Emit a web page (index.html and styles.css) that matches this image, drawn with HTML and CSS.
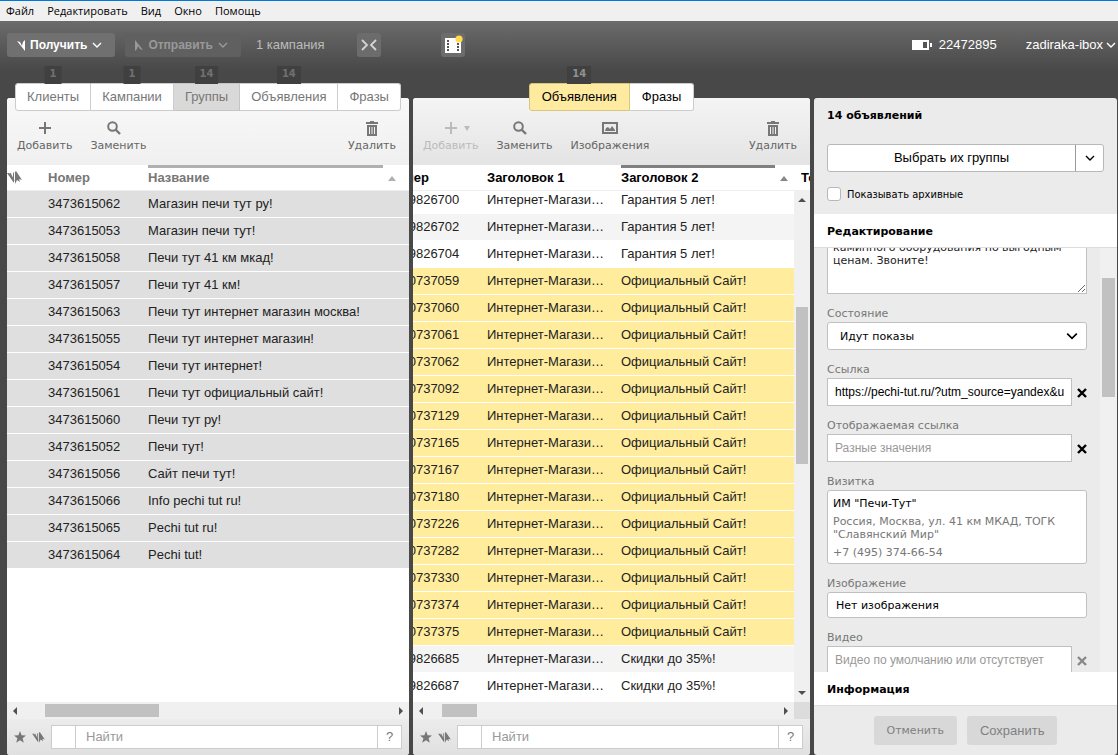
FILE: index.html
```
<!DOCTYPE html>
<html lang="ru">
<head>
    <meta charset="UTF-8">
    <meta name="viewport" content="width=device-width, initial-scale=1.0">
    <title>Директ Коммандер</title>
    <link rel="stylesheet" href="styles.css">
</head>
<body>
    <svg class="sprite" aria-hidden="true">
        <symbol id="i-plus" viewBox="0 0 14 14"><path d="M1 7h12M7 1v12" fill="none" stroke="currentColor" stroke-width="2"/></symbol>
        <symbol id="i-search" viewBox="0 0 14 14"><circle cx="5.500" cy="5.500" r="4.300" fill="none" stroke="currentColor" stroke-width="2"/><path d="M8.500 8.500l4.500 4.500" stroke="currentColor" stroke-width="2.400"/></symbol>
        <symbol id="i-trash" viewBox="0 0 12 15"><path d="M4 0h4v1h4v2H0V1h4zM1 4h10v11H1z" fill="currentColor"/><path d="M3.500 6v7M6 6v7M8.500 6v7" stroke="#f2f2f2"/></symbol>
        <symbol id="i-image" viewBox="0 0 16 12"><path d="M1 1h14v10H1z" fill="none" stroke="currentColor" stroke-width="2"/><path d="M3 9l1-3 2-1 2 2 2-3 3 4v1z" fill="currentColor"/></symbol>
        <symbol id="i-chevron" viewBox="0 0 10 6"><path d="M1 1l4 4 4-4" fill="none" stroke="currentColor" stroke-width="1.400"/></symbol>
        <symbol id="i-star" viewBox="0 0 12 12"><path d="M6 0l1.600 4.200 4.400.2-3.400 2.800 1.200 4.600L6 9.300l-3.800 2.500 1.200-4.600L0 4.400l4.400-.2z" fill="currentColor"/></symbol>
        <symbol id="i-wings" viewBox="0 0 15 13"><path d="M0 2h2l4 5V1l1 1v10zM8 1l1-1 6 9-3-1 1 3-3-2-2 4z" fill="currentColor"/><path d="M3 2l4 8" stroke="currentColor" stroke-width="1.200"/></symbol>
        <symbol id="i-cross" viewBox="0 0 10 10"><path d="M1 1l8 8M9 1L1 9" stroke="currentColor" stroke-width="2.400"/></symbol>
    </svg>

    <nav class="menu">
        <a href="#">Файл</a>
        <a href="#">Редактировать</a>
        <a href="#">Вид</a>
        <a href="#">Окно</a>
        <a href="#">Помощь</a>
    </nav>

    <header class="topbar">
        <button class="top-button get">
            <svg width="8" height="11" viewBox="0 0 8 11"><path d="M0 1l3 1 2 4 1-4 2-2v11z" fill="currentColor"/></svg>
            Получить
            <svg width="10" height="6"><use href="#i-chevron"/></svg>
        </button>
        <button class="top-button send" disabled>
            <svg width="8" height="11" viewBox="0 0 8 11"><path d="M0 0l8 10-3-1-2-3-1 3-2 2z" fill="currentColor"/></svg>
            Отправить
            <svg width="10" height="6"><use href="#i-chevron"/></svg>
        </button>
        <span class="campaigns">1 кампания</span>
        <button class="square-button collapse" aria-label="Свернуть">
            <svg width="16" height="12" viewBox="0 0 16 12"><path d="M1 1l5 5-5 5M15 1l-5 5 5 5" fill="none" stroke="#d4d4d4" stroke-width="1.800"/></svg>
        </button>
        <button class="square-button" aria-label="Видео">
            <svg width="20" height="20" viewBox="0 0 20 20"><path d="M2 3h16v15H2z" fill="#fff"/><path d="M5 5v12M15 8v9" stroke="#555" stroke-width="2" stroke-dasharray="2 1"/><circle cx="16" cy="4" r="3.600" fill="#ffdb4d"/></svg>
        </button>
        <div class="account">
            <svg width="20" height="10" viewBox="0 0 20 10"><path d="M0 0h17v10H0zM18 3h2v4h-2z" fill="#fff"/><path d="M11 2h4v6h-4z" fill="#555"/></svg>
            <span>22472895</span>
            <a class="user" href="#">zadiraka-ibox <svg width="10" height="6"><use href="#i-chevron"/></svg></a>
        </div>
    </header>

    <main class="workspace">
        <section class="column">
            <nav class="tabs tabs-muted">
                <button class="tab"><span class="badge">1</span>Клиенты</button>
                <button class="tab"><span class="badge">1</span>Кампании</button>
                <button class="tab active"><span class="badge">14</span>Группы</button>
                <button class="tab"><span class="badge">14</span>Объявления</button>
                <button class="tab">Фразы</button>
            </nav>
            <div class="panel groups">
                <div class="toolbar">
                    <button class="tool"><svg width="14" height="14"><use href="#i-plus"/></svg>Добавить</button>
                    <button class="tool replace"><svg width="14" height="14"><use href="#i-search"/></svg>Заменить</button>
                    <button class="tool last"><svg width="12" height="15"><use href="#i-trash"/></svg>Удалить</button>
                </div>
                <div class="grid-head">
                    <table>
                        <colgroup><col class="c-state"><col class="c-id"><col></colgroup>
                        <tr>
                            <th><svg width="15" height="13"><use href="#i-wings"/></svg></th>
                            <th>Номер</th>
                            <th><div class="sorted"><span>Название</span><i></i></div></th>
                        </tr>
                    </table>
                </div>
                <div class="grid-body">
                    <div class="grid-clip">
                        <table>
                            <colgroup><col class="c-state"><col class="c-id"><col></colgroup>
                            <tr><td></td><td>3473615062</td><td>Магазин печи тут ру!</td></tr>
                            <tr><td></td><td>3473615053</td><td>Магазин печи тут!</td></tr>
                            <tr><td></td><td>3473615058</td><td>Печи тут 41 км мкад!</td></tr>
                            <tr><td></td><td>3473615057</td><td>Печи тут 41 км!</td></tr>
                            <tr><td></td><td>3473615063</td><td>Печи тут интернет магазин москва!</td></tr>
                            <tr><td></td><td>3473615055</td><td>Печи тут интернет магазин!</td></tr>
                            <tr><td></td><td>3473615054</td><td>Печи тут интернет!</td></tr>
                            <tr><td></td><td>3473615061</td><td>Печи тут официальный сайт!</td></tr>
                            <tr><td></td><td>3473615060</td><td>Печи тут ру!</td></tr>
                            <tr><td></td><td>3473615052</td><td>Печи тут!</td></tr>
                            <tr><td></td><td>3473615056</td><td>Сайт печи тут!</td></tr>
                            <tr><td></td><td>3473615066</td><td>Info pechi tut ru!</td></tr>
                            <tr><td></td><td>3473615065</td><td>Pechi tut ru!</td></tr>
                            <tr><td></td><td>3473615064</td><td>Pechi tut!</td></tr>
                        </table>
                    </div>
                </div>
                <div class="hscroll">
                    <i class="arrow left"></i>
                    <div class="track"><div class="thumb"></div></div>
                    <i class="arrow right"></i>
                </div>
                <div class="filter">
                    <svg width="12" height="12"><use href="#i-star"/></svg>
                    <svg width="13" height="11"><use href="#i-wings"/></svg>
                    <div class="search">
                        <span class="search-mark"></span>
                        <input type="text" placeholder="Найти" aria-label="Найти группы">
                        <button>?</button>
                    </div>
                </div>
            </div>
        </section>

        <section class="column">
            <nav class="tabs tabs-center">
                <button class="tab active"><span class="badge">14</span>Объявления</button>
                <button class="tab">Фразы</button>
            </nav>
            <div class="panel ads">
                <div class="toolbar">
                    <button class="tool" disabled><span class="tool-icon"><svg width="14" height="14"><use href="#i-plus"/></svg><i></i></span>Добавить</button>
                    <button class="tool replace"><svg width="14" height="14"><use href="#i-search"/></svg>Заменить</button>
                    <button class="tool"><svg width="16" height="14"><use href="#i-image"/></svg>Изображения</button>
                    <button class="tool last"><svg width="12" height="15"><use href="#i-trash"/></svg>Удалить</button>
                </div>
                <div class="grid-head">
                    <table>
                        <colgroup><col class="c-id"><col class="c-title"><col class="c-title2"><col></colgroup>
                        <tr>
                            <th>Номер</th>
                            <th>Заголовок 1</th>
                            <th><div class="sorted"><span>Заголовок 2</span><i></i></div></th>
                            <th>Текст</th>
                        </tr>
                    </table>
                </div>
                <div class="grid-body">
                    <div class="grid-clip">
                        <table>
                            <colgroup><col class="c-id"><col class="c-title"><col></colgroup>
                            <tr><td>3459826700</td><td>Интернет-Магазин печей</td><td>Гарантия 5 лет!</td></tr>
                            <tr class="even"><td>3459826702</td><td>Интернет-Магазин печей</td><td>Гарантия 5 лет!</td></tr>
                            <tr><td>3459826704</td><td>Интернет-Магазин печей</td><td>Гарантия 5 лет!</td></tr>
                            <tr class="selected"><td>5310737059</td><td>Интернет-Магазин печей</td><td>Официальный Сайт!</td></tr>
                            <tr class="selected"><td>5310737060</td><td>Интернет-Магазин печей</td><td>Официальный Сайт!</td></tr>
                            <tr class="selected"><td>5310737061</td><td>Интернет-Магазин печей</td><td>Официальный Сайт!</td></tr>
                            <tr class="selected"><td>5310737062</td><td>Интернет-Магазин печей</td><td>Официальный Сайт!</td></tr>
                            <tr class="selected"><td>5310737092</td><td>Интернет-Магазин печей</td><td>Официальный Сайт!</td></tr>
                            <tr class="selected"><td>5310737129</td><td>Интернет-Магазин печей</td><td>Официальный Сайт!</td></tr>
                            <tr class="selected"><td>5310737165</td><td>Интернет-Магазин печей</td><td>Официальный Сайт!</td></tr>
                            <tr class="selected"><td>5310737167</td><td>Интернет-Магазин печей</td><td>Официальный Сайт!</td></tr>
                            <tr class="selected"><td>5310737180</td><td>Интернет-Магазин печей</td><td>Официальный Сайт!</td></tr>
                            <tr class="selected"><td>5310737226</td><td>Интернет-Магазин печей</td><td>Официальный Сайт!</td></tr>
                            <tr class="selected"><td>5310737282</td><td>Интернет-Магазин печей</td><td>Официальный Сайт!</td></tr>
                            <tr class="selected"><td>5310737330</td><td>Интернет-Магазин печей</td><td>Официальный Сайт!</td></tr>
                            <tr class="selected"><td>5310737374</td><td>Интернет-Магазин печей</td><td>Официальный Сайт!</td></tr>
                            <tr class="selected"><td>5310737375</td><td>Интернет-Магазин печей</td><td>Официальный Сайт!</td></tr>
                            <tr class="even"><td>3459826685</td><td>Интернет-Магазин печей</td><td>Скидки до 35%!</td></tr>
                            <tr><td>3459826687</td><td>Интернет-Магазин печей</td><td>Скидки до 35%!</td></tr>
                        </table>
                    </div>
                    <div class="vscroll">
                        <i class="arrow up"></i>
                        <div class="track"><div class="thumb"></div></div>
                        <i class="arrow down"></i>
                    </div>
                </div>
                <div class="hscroll">
                    <i class="arrow left"></i>
                    <div class="track"><div class="thumb"></div></div>
                    <i class="arrow right"></i>
                    <span class="corner"></span>
                </div>
                <div class="filter">
                    <svg width="12" height="12"><use href="#i-star"/></svg>
                    <svg width="13" height="11"><use href="#i-wings"/></svg>
                    <div class="search">
                        <span class="search-mark"></span>
                        <input type="text" placeholder="Найти" aria-label="Найти объявления">
                        <button>?</button>
                    </div>
                </div>
            </div>
        </section>

        <aside class="panel editor">
            <div class="summary">
                <h2>14 объявлений</h2>
                <div class="split">
                    <button class="split-main">Выбрать их группы</button>
                    <button class="split-more" aria-label="Ещё"><svg width="10" height="6"><use href="#i-chevron"/></svg></button>
                </div>
                <label class="archived"><input type="checkbox">Показывать архивные</label>
            </div>
            <h2 class="section-title">Редактирование</h2>
            <div class="form-area">
                <form class="form">
                    <textarea class="box" aria-label="Текст">каминного оборудования по выгодным ценам. Звоните!</textarea>
                    <label for="state">Состояние</label>
                    <div class="select">
                        <select class="box" id="state"><option>Идут показы</option></select>
                        <svg width="12" height="8"><use href="#i-chevron"/></svg>
                    </div>
                    <label for="link">Ссылка</label>
                    <div class="clearable">
                        <input class="box" id="link" type="text" value="https://pechi-tut.ru/?utm_source=yandex&amp;u">
                        <button type="button" aria-label="Очистить"><svg width="10" height="10"><use href="#i-cross"/></svg></button>
                    </div>
                    <label for="shown">Отображаемая ссылка</label>
                    <div class="clearable">
                        <input class="box" id="shown" type="text" placeholder="Разные значения">
                        <button type="button" aria-label="Очистить"><svg width="10" height="10"><use href="#i-cross"/></svg></button>
                    </div>
                    <label for="card">Визитка</label>
                    <button class="box card" id="card" type="button">
                        <b>ИМ "Печи-Тут"</b>
                        <span>Россия, Москва, ул. 41 км МКАД, ТОГК "Славянский Мир"</span>
                        <span>+7 (495) 374-66-54</span>
                    </button>
                    <label for="image">Изображение</label>
                    <button class="box image" id="image" type="button">Нет изображения</button>
                    <label for="video">Видео</label>
                    <div class="clearable">
                        <input class="box" id="video" type="text" placeholder="Видео по умолчанию или отсутствует">
                        <button type="button" aria-label="Очистить" disabled><svg width="10" height="10"><use href="#i-cross"/></svg></button>
                    </div>
                </form>
                <div class="vscroll">
                    <div class="track"><div class="thumb"></div></div>
                </div>
            </div>
            <h2 class="section-title">Информация</h2>
            <div class="actions">
                <button class="cancel" disabled>Отменить</button>
                <button class="save" disabled>Сохранить</button>
            </div>
        </aside>
    </main>
</body>
</html>
```
FILE: styles.css
```
* {
    box-sizing: border-box;
}
body {
    margin: 0;
    height: 100vh;
    display: flex;
    flex-direction: column;
    overflow: hidden;
    background: #484848;
    color: #222;
    font: 13px/16px "Liberation Sans", Arial, sans-serif;
}
button, input, select, textarea {
    font: inherit;
    color: inherit;
    margin: 0;
    padding: 0;
    border: 0;
    border-radius: 0;
    background: none;
    outline: 0;
}
button {
    white-space: nowrap;
}
svg {
    display: block;
    flex: none;
}
.sprite {
    position: absolute;
    width: 0;
    height: 0;
}

/* menu and top bar */
.menu {
    display: flex;
    gap: 13px;
    height: 21px;
    padding-left: 6px;
    border-top: 1px solid #0078d7;
    background: #f0f0f0;
    font: 11px/20px "Open Sans", sans-serif;
}
.menu a {
    color: #000;
    text-decoration: none;
}
.topbar {
    display: flex;
    align-items: center;
    height: 62px;
    padding: 0 2px 14px 7px;
    background: linear-gradient(#6b6b6b, #484848 50px);
    color: #fff;
}
.top-button {
    display: flex;
    align-items: center;
    gap: 5px;
    height: 24px;
    padding: 0 13px 0 10px;
    border-radius: 3px;
    background: #707070;
    font-size: 12px;
    font-weight: bold;
}
.send {
    margin: 0 15px 0 10px;
    background: #606060;
    color: #999;
}
.campaigns {
    color: #bbb;
}
.square-button {
    display: flex;
    align-items: center;
    justify-content: center;
    width: 24px;
    height: 24px;
    border-radius: 3px;
    background: #6c6c6c;
}
.collapse {
    margin: 0 60px 0 32px;
}
.account {
    display: flex;
    align-items: center;
    gap: 7px;
    margin-left: auto;
}
.user {
    display: flex;
    align-items: center;
    gap: 3px;
    margin-left: 22px;
    color: #fff;
    text-decoration: none;
}

/* columns */
.workspace {
    flex: 1;
    min-height: 0;
    display: grid;
    grid-template-columns: 402fr 397fr 303px;
    grid-template-rows: 100%;
    gap: 4px;
    padding: 0 1px 0 7px;
}
.column {
    min-width: 0;
    display: flex;
    flex-direction: column;
}
.tabs {
    position: relative;
    z-index: 1;
    display: flex;
    height: 28px;
    margin: 0 8px -13px;
}
.tabs-center {
    justify-content: center;
}
.tab {
    position: relative;
    padding: 0 12px;
    border: 1px solid #ccc;
    border-left-width: 0;
    background: #fff;
    color: #000;
}
.tabs-muted .tab {
    flex: 1 1 auto;
    padding: 0;
    color: #777;
}
.tab:first-child {
    border-left-width: 1px;
    border-radius: 3px 0 0 3px;
}
.tab:last-child {
    border-radius: 0 3px 3px 0;
}
.tab.active {
    background: #ffeba0;
    border-color: #d6c680;
}
.tabs-muted .tab.active {
    background: #d9d9d9;
    border-color: #c4c4c4;
}
.badge {
    position: absolute;
    bottom: 100%;
    left: 50%;
    transform: translateX(-50%);
    padding: 0 5px 2px;
    background: #404040;
    color: #707070;
    font: bold 10px/16px "DejaVu Sans", sans-serif;
}
.tabs-center .badge {
    color: #909090;
}
.panel {
    flex: 1;
    min-height: 0;
    display: flex;
    flex-direction: column;
    overflow: hidden;
    border-radius: 3px;
    background: #fff;
}
.toolbar {
    display: flex;
    gap: 18px;
    height: 67px;
    padding: 23px 13px 0 10px;
    background: linear-gradient(#f8f8f8, #f0f0f0);
}
.ads .toolbar {
    background: linear-gradient(#f4f4f4, #e4e4e4);
}
.tool {
    display: flex;
    flex-direction: column;
    align-items: center;
    gap: 4px;
    height: 32px;
    color: #666;
    font: 11px/14px "DejaVu Sans", Verdana, sans-serif;
}
.tool:disabled {
    color: #bbb;
}
.tool svg {
    color: #777;
}
.replace svg {
    margin-right: 8px;
}
.tool.last {
    gap: 3px;
    margin-left: auto;
}
.tool-icon {
    display: flex;
    align-items: center;
    gap: 6px;
    margin-left: 12px;
}
.tool-icon i {
    border: 3px solid transparent;
    border-top: 5px solid;
    border-bottom: 0;
}
.tool-icon i, .tool-icon svg {
    color: #bbb;
}

/* tables */
table {
    width: 100%;
    table-layout: fixed;
    border-spacing: 0;
}
th, td {
    padding: 0;
    height: 27px;
    text-align: left;
    white-space: nowrap;
    overflow: hidden;
}
td {
    border-bottom: 1px solid #fff;
    text-overflow: ellipsis;
}
th {
    height: 25px;
    color: #000;
}
.c-state {
    width: 41px;
}
.c-id {
    width: 100px;
}
.c-title {
    width: 134px;
}
.c-title2 {
    width: 180px;
}
.grid-head {
    border-bottom: 1px solid #eee;
    overflow: hidden;
}
.groups th {
    color: #777;
}
.groups td {
    background: #dfdfdf;
}
.ads table {
    width: calc(100% + 26px);
    margin-left: -26px;
}
.ads td:nth-child(2) {
    padding-right: 16px;
}
.even td {
    background: #f4f4f4;
}
.selected td {
    background: #ffec9c;
}
.sorted {
    display: flex;
}
.sorted span {
    flex: 1;
    height: 25px;
    border-top: 3px solid #808080;
    line-height: 19px;
}
.groups .sorted span {
    border-color: #b0b0b0;
}
.sorted i {
    align-self: center;
    width: 8px;
    margin: 2px 13px 0 5px;
    border: 4px solid transparent;
    border-top: 0;
    border-bottom: 5px solid #888;
}
.groups .sorted i {
    border-bottom-color: #b0b0b0;
}
.grid-body {
    flex: 1;
    min-height: 0;
    display: flex;
}
.grid-clip {
    flex: 1;
    min-width: 0;
    overflow: hidden;
}
/* list is scrolled a little down */
.ads .grid-clip table {
    margin-top: -4px;
}

/* scrollbars */
.hscroll, .vscroll {
    display: flex;
    align-items: center;
    background: #f0f0f0;
}
.hscroll {
    height: 17px;
}
.vscroll {
    flex-direction: column;
    width: 16px;
}
.track {
    flex: 1;
    align-self: stretch;
    display: flex;
    padding: 2px 0;
}
.vscroll .track {
    flex-direction: column;
    padding: 0 2px;
}
.thumb {
    background: #c1c1c1;
}
.groups .thumb {
    width: 31%;
    margin-left: 21px;
}
.ads .hscroll .thumb {
    width: 10%;
    margin-left: 12px;
}
.ads .vscroll .thumb {
    height: 33%;
    margin-top: 99px;
}
.editor .thumb {
    height: 28%;
    margin-top: 30px;
}
.arrow {
    width: 8px;
    height: 8px;
    margin: 0 4px;
    border: 4px solid transparent;
}
.arrow.left {
    border-right-color: #505050;
    margin: 0 7px 0 2px;
}
.arrow.right {
    border-left-color: #505050;
    margin: 0 2px 0 7px;
}
.arrow.up {
    border-bottom-color: #505050;
    margin: 3px 0 6px;
}
.arrow.down {
    border-top-color: #505050;
    margin: 6px 0 3px;
}
.corner {
    width: 16px;
    height: 17px;
    background: #dcdcdc;
}

/* filter row */
.filter {
    display: flex;
    align-items: center;
    gap: 6px;
    height: 36px;
    padding: 0 7px;
    background: linear-gradient(#ececec, #e0e0e0);
    color: #777;
}
.search {
    flex: 1;
    display: flex;
    height: 24px;
    border: 1px solid #ccc;
    background: #fff;
}
.search-mark {
    width: 24px;
    border-right: 1px solid #ccc;
}
.search input {
    flex: 1;
    min-width: 0;
    padding: 0 10px;
}
.search button {
    width: 24px;
    border-left: 1px solid #ccc;
}
::placeholder {
    color: #999;
    opacity: 1;
}

/* editor */
.editor {
    margin-top: 15px;
    background: #ebebeb;
    color: #000;
    font: 11px/13px "DejaVu Sans", Verdana, sans-serif;
}
.summary {
    height: 116px;
    padding: 10px 13px 0;
}
h2 {
    margin: 0;
    font-size: 11px;
    line-height: 16px;
}
.split {
    display: flex;
    height: 28px;
    margin: 20px 0 15px;
    border: 1px solid #b8b8b8;
    border-radius: 3px;
    background: #fff;
    font: 13px/16px "Liberation Sans", Arial, sans-serif;
}
.split-main {
    flex: 1;
}
.split-more {
    display: flex;
    align-items: center;
    justify-content: center;
    width: 28px;
    border-left: 1px solid #999;
}
.archived {
    display: flex;
    align-items: center;
    gap: 6px;
    font-family: "DejaVu Sans Condensed", Tahoma, sans-serif;
}
.archived input {
    appearance: none;
    width: 14px;
    height: 14px;
    border: 1px solid #b8b8b8;
    border-radius: 3px;
    background: #fff;
}
.section-title {
    padding: 10px 13px 7px;
    border-bottom: 1px solid #ddd;
    background: #fff;
}
.form-area {
    flex: 1;
    min-height: 0;
    display: flex;
    overflow: hidden;
}
.form {
    flex: 1;
    min-width: 0;
    margin-top: -12px;
    padding: 0 13px;
}
.form label {
    display: block;
    margin: 13px 0 1px;
    color: #777;
    line-height: 14px;
}
.box {
    display: block;
    width: 100%;
    height: 28px;
    border: 1px solid #c0c0c0;
    background: #fff;
}
textarea.box {
    height: 58px;
    padding: 4px 5px;
    color: #222;
    overflow: hidden;
}
.select {
    position: relative;
}
.select .box {
    appearance: none;
    padding: 0 12px;
    border-radius: 3px;
}
.select svg {
    position: absolute;
    right: 9px;
    top: 10px;
    pointer-events: none;
}
.clearable {
    display: flex;
    align-items: center;
    gap: 5px;
}
.clearable .box {
    flex: 1;
    min-width: 0;
    padding: 0 7px;
    font: 12px/16px "Liberation Sans", Arial, sans-serif;
}
.clearable button {
    padding-top: 2px;
}
.clearable button:disabled {
    color: #888;
}
.card {
    height: 74px;
    padding: 2px 5px 0;
    border-radius: 3px;
    text-align: left;
    white-space: normal;
}
.card b, .card span {
    display: block;
    font-weight: normal;
}
.card span {
    margin-top: 5px;
    color: #777;
}
.image {
    height: 26px;
    padding: 0 8px;
    border-radius: 3px;
    text-align: left;
}
.editor .vscroll {
    width: 17px;
}
.actions {
    display: flex;
    justify-content: center;
    gap: 10px;
    height: 49px;
    padding: 10px 0;
}
.actions button {
    padding: 0 13px;
    border-radius: 3px;
    background: #d8d8d8;
    color: #808080;
}
.actions .save {
    font: 13px/16px "Liberation Sans", Arial, sans-serif;
}
```
